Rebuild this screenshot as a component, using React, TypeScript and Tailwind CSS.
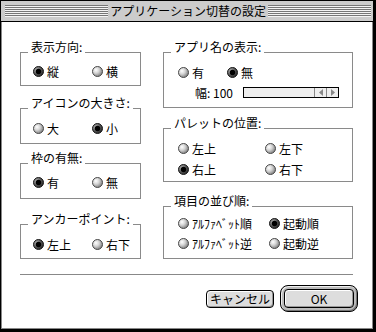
import React from "react";

const FONT = "font-['Noto_Sans_CJK_JP','Noto_Sans',sans-serif]";

function Radio({ on }: { on?: boolean }) {
  return (
    <svg width="11" height="11" viewBox="0 0 11 11" className="shrink-0">
      {on ? (
        <>
          <circle cx="5.5" cy="5.5" r="5" fill="url(#rOn)" stroke="#1a1a1a" strokeWidth="1" />
          <circle cx="5.5" cy="5.5" r="2.7" fill="#000" />
        </>
      ) : (
        <circle cx="5.5" cy="5.5" r="5" fill="url(#rOff)" stroke="#4a4a4a" strokeWidth="1" />
      )}
    </svg>
  );
}

function Item({ on, label, className = "" }: { on?: boolean; label: React.ReactNode; className?: string }) {
  return (
    <div className={`flex h-[11px] items-center gap-[3px] ${className}`}>
      <Radio on={on} />
      <span className="whitespace-nowrap text-[12px] leading-[12px]">{label}</span>
    </div>
  );
}

function Box({ label, className = "", children }: { label: string; className?: string; children?: React.ReactNode }) {
  return (
    <div className={`relative border border-[#8a8a8a] ${className}`}>
      <span className="absolute left-[7px] top-[-14px] whitespace-nowrap bg-white px-[3px] text-[12px] leading-[16px]">
        {label}
      </span>
      {children}
    </div>
  );
}

export default function App() {
  return (
    <div className={`${FONT} h-[332px] w-[376px] border-b-[3px] border-l border-r-[3px] border-t border-black bg-white text-black flex flex-col`}>
      <svg width="0" height="0" className="absolute">
        <defs>
          <radialGradient id="rOff" cx="35%" cy="35%" r="70%">
            <stop offset="0%" stopColor="#ffffff" />
            <stop offset="45%" stopColor="#d4d4d4" />
            <stop offset="100%" stopColor="#7a7a7a" />
          </radialGradient>
          <radialGradient id="rOn" cx="35%" cy="35%" r="70%">
            <stop offset="0%" stopColor="#bbbbbb" />
            <stop offset="60%" stopColor="#555555" />
            <stop offset="100%" stopColor="#222222" />
          </radialGradient>
        </defs>
      </svg>

      {/* title bar */}
      <div className="flex h-[21px] shrink-0 items-center border-b border-black bg-[#cccccc] pl-[4px] pr-[2px]">
        <div className="h-[12px] flex-1 bg-[repeating-linear-gradient(to_bottom,#777777_0px,#777777_1px,#f4f4f4_1px,#f4f4f4_2px)]" />
        <span className="whitespace-nowrap px-[2px] text-[12px] leading-[16px]">アプリケーション切替の設定</span>
        <div className="h-[12px] flex-1 bg-[repeating-linear-gradient(to_bottom,#777777_0px,#777777_1px,#f4f4f4_1px,#f4f4f4_2px)]" />
      </div>

      {/* body */}
      <div className="flex flex-1 flex-col border-b border-l border-r border-[#888888] pl-[18px] pr-[14px]">
        <div className="flex gap-[22px]">
          {/* left column */}
          <div className="flex w-[121px] flex-col">
            <Box label="表示方向:" className="mt-[30px] h-[34px] pl-[12px] pt-[13px]">
              <div className="flex">
                <Item on label="縦" className="w-[59px]" />
                <Item label="横" />
              </div>
            </Box>
            <Box label="アイコンの大きさ:" className="mt-[22px] h-[36px] pl-[12px] pt-[14px]">
              <div className="flex">
                <Item label="大" className="w-[59px]" />
                <Item on label="小" />
              </div>
            </Box>
            <Box label="枠の有無:" className="mt-[19px] h-[36px] pl-[12px] pt-[13px]">
              <div className="flex">
                <Item on label="有" className="w-[59px]" />
                <Item label="無" />
              </div>
            </Box>
            <Box label="アンカーポイント:" className="mt-[25px] h-[35px] pl-[12px] pt-[14px]">
              <div className="flex">
                <Item on label="左上" className="w-[59px]" />
                <Item label="右下" />
              </div>
            </Box>
          </div>

          {/* right column */}
          <div className="flex w-[190px] flex-col">
            <Box label="アプリ名の表示:" className="mt-[30px] h-[56px] pl-[14px] pt-[14px]">
              <div className="flex">
                <Item label="有" className="w-[49px]" />
                <Item on label="無" />
              </div>
              <div className="mt-[9px] flex h-[11px] items-center pl-[17px]">
                <span className="whitespace-nowrap text-[12px] leading-[12px]">幅: 100</span>
                <div className="ml-[10px] flex h-[11px] w-[96px] border border-black bg-[#eeeeee]">
                  <div className="flex-1" />
                  <div className="flex w-[12px] items-center justify-center border-l border-[#888888]">
                    <svg width="4" height="7" viewBox="0 0 4 7">
                      <path d="M4 0 L0 3.5 L4 7 Z" fill="#888888" />
                    </svg>
                  </div>
                  <div className="flex w-[12px] items-center justify-center border-l border-[#888888]">
                    <svg width="4" height="7" viewBox="0 0 4 7">
                      <path d="M0 0 L4 3.5 L0 7 Z" fill="#888888" />
                    </svg>
                  </div>
                </div>
              </div>
            </Box>
            <Box label="パレットの位置:" className="mt-[20px] h-[54px] pl-[14px] pt-[14px]">
              <div className="flex flex-col gap-[10px]">
                <div className="flex">
                  <Item label="左上" className="w-[87px]" />
                  <Item label="左下" />
                </div>
                <div className="flex">
                  <Item on label="右上" className="w-[87px]" />
                  <Item label="右下" />
                </div>
              </div>
            </Box>
            <Box label="項目の並び順:" className="mt-[24px] h-[53px] pl-[14px] pt-[11px]">
              <div className="flex flex-col gap-[9px]">
                <div className="flex">
                  <Item label="ｱﾙﾌｧﾍﾞｯﾄ順" className="w-[91px]" />
                  <Item on label="起動順" />
                </div>
                <div className="flex">
                  <Item label="ｱﾙﾌｧﾍﾞｯﾄ逆" className="w-[91px]" />
                  <Item label="起動逆" />
                </div>
              </div>
            </Box>
          </div>
        </div>

        {/* separator */}
        <div className="mt-[15px] h-px w-[333px] bg-[#888888]" />

        {/* buttons */}
        <div className="mt-[10px] flex items-center justify-end gap-[6px]">
          <div className="flex h-[18px] w-[68px] items-center justify-center rounded-[4px] border border-black bg-[#dddddd] text-[12px] leading-[12px] shadow-[inset_1px_1px_0_#ffffff,inset_-1px_-1px_0_#999999]">
            キャンセル
          </div>
          <div className="h-[27px] w-[78px] rounded-[8px] border border-black bg-[#bbbbbb] p-[3px] shadow-[inset_1px_1px_0_#eeeeee,inset_-1px_-1px_0_#777777]">
            <div className="flex h-full w-full items-center justify-center rounded-[4px] border border-black bg-[#dddddd] text-[12px] leading-[12px] shadow-[inset_1px_1px_0_#ffffff,inset_-1px_-1px_0_#999999]">
              OK
            </div>
          </div>
        </div>
      </div>
    </div>
  );
}
